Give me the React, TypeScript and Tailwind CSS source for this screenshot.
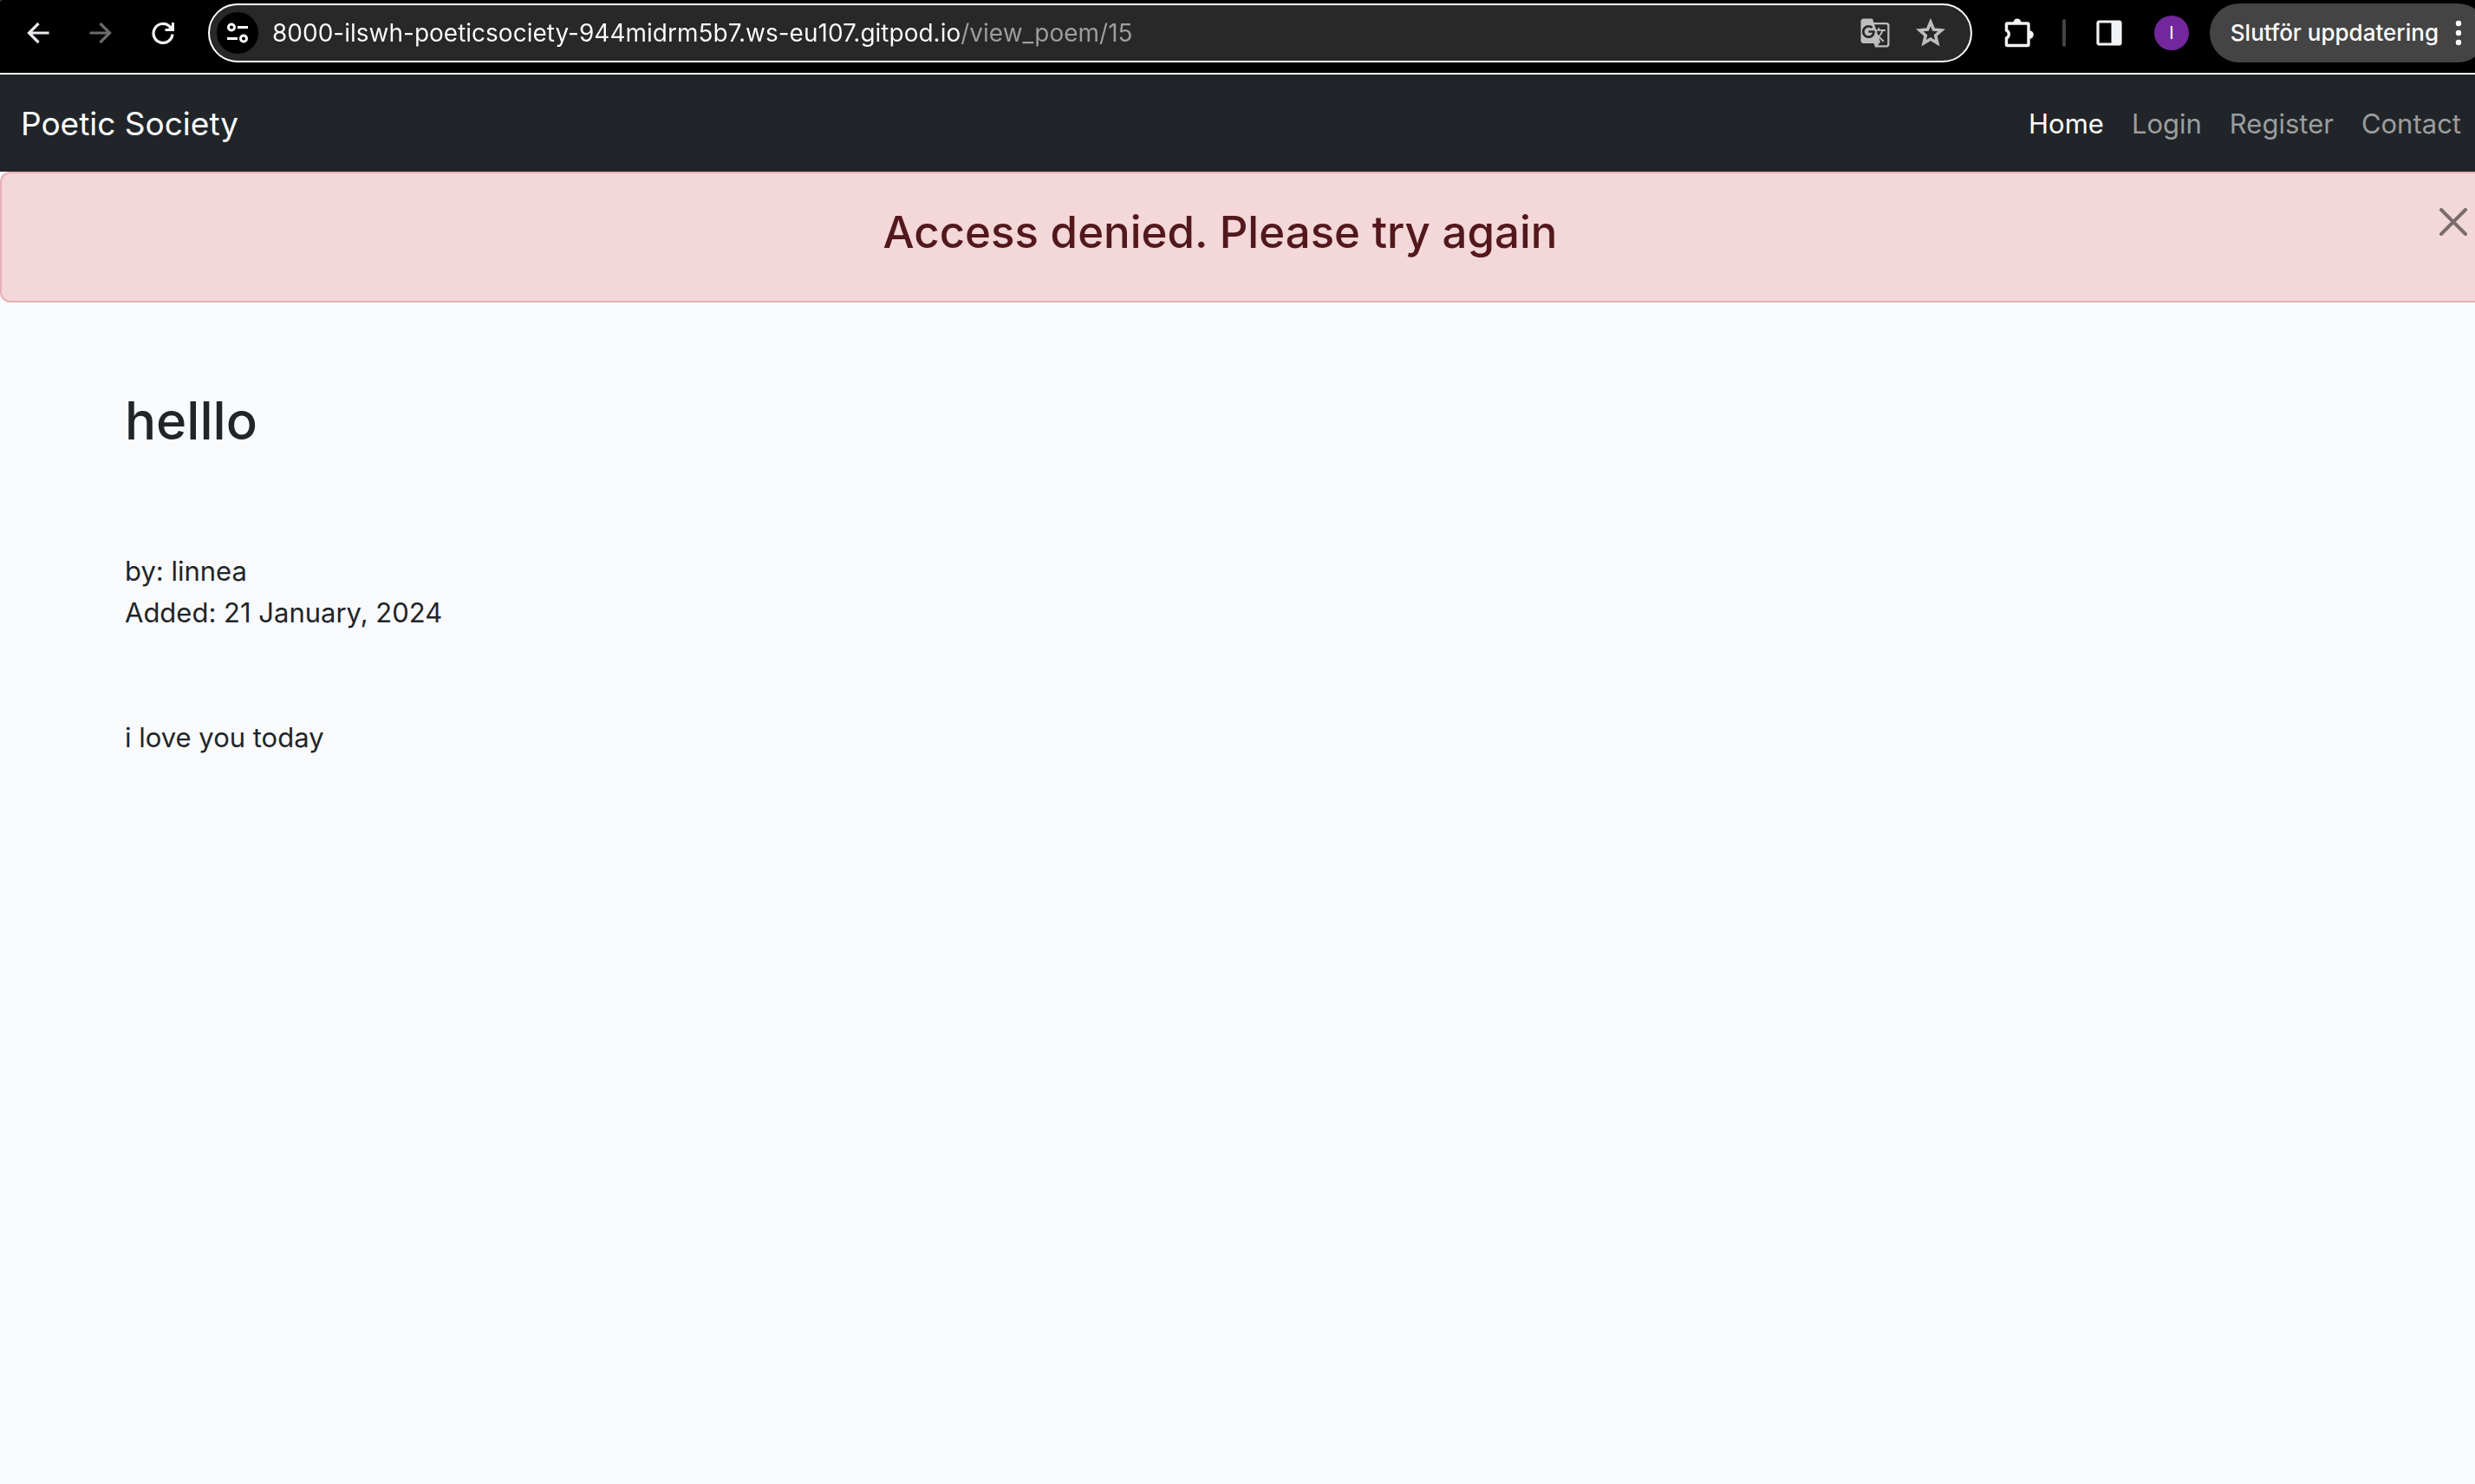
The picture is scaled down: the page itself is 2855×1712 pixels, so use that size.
import React from "react";
import { MdGTranslate } from "react-icons/md";

const iconButton = "flex size-12 shrink-0 items-center justify-center rounded-full";

function BrowserBar() {
  return (
    <header className="bg-[#3c3c3c]">
      <div className="flex items-center overflow-hidden rounded-tl-sm border-b-2 border-white bg-black pt-1 pb-3 pl-5 text-[28px] leading-[34px] text-white">
        <div className="flex gap-6">
          <button aria-label="Back" className={iconButton}>
            <svg width="26" height="26" viewBox="0 0 26 26" fill="none" stroke="#e8eaed" strokeWidth="3.200">
              <path d="M25.500 13H3M13.500 2 2.500 13l11 11" />
            </svg>
          </button>
          <button aria-label="Forward" className={iconButton}>
            <svg width="26" height="26" viewBox="0 0 26 26" fill="none" stroke="#6b6b6b" strokeWidth="3.200">
              <path d="M0.500 13h22M12.500 2l11 11-11 11" />
            </svg>
          </button>
          <button aria-label="Reload" className={iconButton}>
            <svg width="26" height="26" viewBox="0 0 26 26" fill="none" stroke="#f1f3f4" strokeWidth="3.200">
              <path d="M24 14.500A11 11 0 1 1 20.500 5.300L23 8" />
              <path d="M24.500 1v8.500H15.500" />
              <path d="M25 2.500v7.500H17z" fill="#f1f3f4" stroke="none" />
            </svg>
          </button>
        </div>

        <div className="ml-7 flex h-[68px] min-w-0 flex-1 items-center rounded-full border-2 border-white bg-[#282828] pr-[22px] pl-2">
          <button aria-label="Site information" className={`${iconButton} bg-black`}>
            <svg width="26" height="24" viewBox="0 0 26 24" fill="none" stroke="#fff" strokeWidth="3">
              <circle cx="6" cy="5.500" r="3.500" />
              <path d="M13 5.500h12M1 18.500h12" />
              <circle cx="20" cy="18.500" r="3.500" />
            </svg>
          </button>
          <input
            aria-label="Address"
            defaultValue="8000-ilswh-poeticsociety-944midrm5b7.ws-eu107.gitpod.io/view_poem/15"
            className="ml-4 min-w-0 flex-1 bg-[linear-gradient(to_right,#fff_795px,#9e9e9e_795px)] bg-clip-text text-transparent outline-none"
          />
          <div className="flex gap-4">
            <button aria-label="Translate this page" className={iconButton}>
              <MdGTranslate size={36} color="#bdbdbd" />
            </button>
            <button aria-label="Bookmark this page" className={iconButton}>
              <svg width="34" height="34" viewBox="0 0 34 34" fill="none" stroke="#bdbdbd" strokeWidth="3.600">
                <path d="M17 4.500l3.500 8.500 9.100.8-6.900 6 2.100 9-7.800-4.800-7.800 4.800 2.100-9-6.900-6 9.100-.8z" />
              </svg>
            </button>
          </div>
        </div>

        <button aria-label="Extensions" className={`${iconButton} ml-[30px]`}>
          <svg width="34" height="34" viewBox="0 0 34 34" fill="none">
            <path
              d="M3.500 6h23.500a1 1 0 0 1 1 1v23.500a1 1 0 0 1-1 1H3.500a1 1 0 0 1-1-1V23a5 5 0 0 0 0-9V7a1 1 0 0 1 1-1z"
              stroke="#f1f3f4"
              strokeWidth="3.400"
            />
            <path d="M10.500 5a4.500 4.500 0 0 1 9 0zM29 14.200a4.800 4.800 0 0 1 0 9.600z" fill="#f1f3f4" />
          </svg>
        </button>
        <span className="mx-[26px] h-8 w-1 shrink-0 rounded-full bg-[#444]" />
        <button aria-label="Side panel" className={iconButton}>
          <svg width="30" height="30" viewBox="0 0 30 30">
            <rect x="2" y="2" width="26" height="26" rx="1.500" fill="none" stroke="#f1f3f4" strokeWidth="3.200" />
            <path d="M17.500 2H28v26H17.500z" fill="#f1f3f4" />
          </svg>
        </button>
        <button
          aria-label="Profile"
          className="mr-6 ml-7 flex size-10 shrink-0 items-center justify-center rounded-full bg-[#74279c] text-[20px]"
        >
          I
        </button>
        <button className="-mr-3.5 flex h-[68px] shrink-0 items-center rounded-full bg-[#444] pr-7 pl-6 text-[26px] font-medium">
          Slutför uppdatering
          <svg className="ml-[18px]" width="10" height="30" viewBox="0 0 10 30" fill="#fff">
            <circle cx="5" cy="4" r="3.200" />
            <circle cx="5" cy="15" r="3.200" />
            <circle cx="5" cy="26" r="3.200" />
          </svg>
        </button>
      </div>
    </header>
  );
}

function SiteNav() {
  return (
    <nav className="flex h-28 items-center justify-between bg-[#212529] pt-0.5 pr-4 pl-6">
      <a href="#home" className="text-[37px] leading-[60px] text-white">
        Poetic Society
      </a>
      <div className="flex gap-8 text-[31px] leading-12 text-[#9b9d9f]">
        <a href="#home" className="text-white">Home</a>
        <a href="#login">Login</a>
        <a href="#register">Register</a>
        <a href="#contact">Contact</a>
      </div>
    </nav>
  );
}

function Alert() {
  return (
    <div
      role="alert"
      className="relative rounded-l-xl border-2 border-r-0 border-[#e8afb4] bg-[#f3d7d9] pt-[34px] pr-[74px] pb-[46px] pl-8 text-center text-[#52181d]"
    >
      <h3 className="text-[51px] leading-[67px] font-medium">Access denied. Please try again</h3>
      <button aria-label="Close" className="absolute top-10 right-[9px] text-[#7a6c6d]">
        <svg width="32" height="32" viewBox="0 0 32 32" stroke="currentColor" strokeWidth="4" strokeLinecap="round">
          <path d="M2 2l28 28M30 2 2 30" />
        </svg>
      </button>
    </div>
  );
}

export default function App() {
  return (
    <div className="min-h-screen bg-[#f9fafc] font-['Inter',sans-serif] text-[#212529]">
      <BrowserBar />
      <SiteNav />
      <Alert />
      <main className="px-36 pt-[98px] text-[31px] leading-12">
        <h2 className="text-[60px] leading-[77px] font-medium">helllo</h2>
        <p className="mt-[111px]">
          by: linnea
          <br />
          Added: 21 January, 2024
        </p>
        <p className="mt-24">i love you today</p>
      </main>
    </div>
  );
}
